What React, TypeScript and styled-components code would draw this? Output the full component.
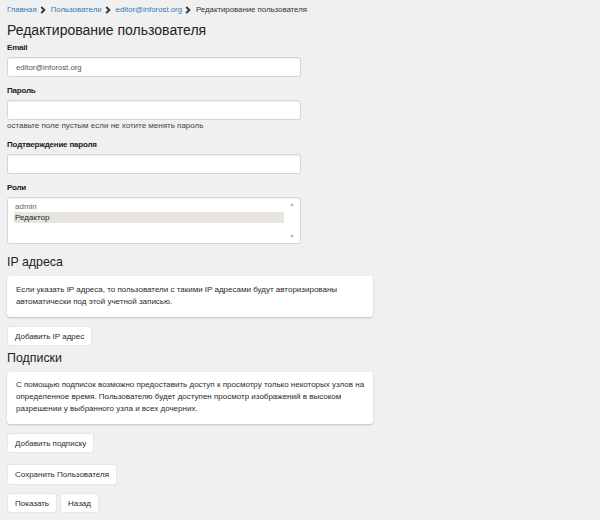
import React from 'react';
import styled, { createGlobalStyle } from 'styled-components';

const Global = createGlobalStyle`
  html, body {
    margin: 0;
    padding: 0;
    background: #f0f0f0;
    font-family: "Liberation Sans", Arial, sans-serif;
    color: #333;
  }
`;

const Page = styled.div`
  padding: 4px 7px 0 7px;
  display: flex;
  flex-direction: column;
  align-items: flex-start;
`;

const Crumbs = styled.nav`
  display: flex;
  align-items: center;
  height: 12px;
  font-size: 7.8px;
  line-height: 12px;
  color: #333;
`;

const Crumb = styled.a`
  color: #337ab7;
  text-decoration: none;
`;

const Sep = styled.span`
  display: inline-flex;
  margin: 0 5px 0 3px;
`;

const Title = styled.h1`
  margin: 3px 0 0 0;
  font-size: 14px;
  line-height: 22px;
  font-weight: 400;
  color: #222;
`;

const Label = styled.label<{ $top: number }>`
  display: block;
  margin-top: ${(p) => p.$top}px;
  font-size: 8px;
  letter-spacing: -0.2px;
  line-height: 12px;
  font-weight: 700;
  color: #222;
`;

const Input = styled.input`
  box-sizing: border-box;
  margin-top: 3px;
  width: 294px;
  height: 20px;
  padding: 0 8px;
  border: 1px solid #d4d4d4;
  border-radius: 3px;
  background: #fff;
  box-shadow: inset 0 1px 1px rgba(0, 0, 0, 0.05);
  font-family: inherit;
  font-size: 7.7px;
  color: #555;
  outline: none;
`;

const Help = styled.div`
  font-size: 8px;
  line-height: 12px;
  color: #444;
`;

const ListBox = styled.div`
  box-sizing: border-box;
  margin-top: 3px;
  width: 294px;
  height: 47px;
  display: flex;
  border: 1px solid #d4d4d4;
  border-radius: 3px;
  background: #fff;
  box-shadow: inset 0 1px 1px rgba(0, 0, 0, 0.05);
`;

const Options = styled.div`
  flex: 1;
  padding: 3px 0 0 6px;
`;

const Option = styled.div<{ $selected?: boolean }>`
  height: 11px;
  line-height: 11px;
  padding-left: 1px;
  font-size: 8px;
  color: ${(p) => (p.$selected ? '#222' : '#666')};
  background: ${(p) => (p.$selected ? '#e8e5e1' : 'transparent')};
`;

const Scroll = styled.div`
  width: 16px;
  display: flex;
  flex-direction: column;
  justify-content: space-between;
  align-items: center;
  padding: 4px 0;
  color: #aaa;
  font-size: 5px;
  line-height: 5px;
`;

const Heading = styled.h2<{ $top: number }>`
  margin: ${(p) => p.$top}px 0 0 0;
  font-size: 12.4px;
  line-height: 18px;
  font-weight: 400;
  color: #222;
`;

const Card = styled.div<{ $pad: number }>`
  box-sizing: border-box;
  margin-top: 5px;
  width: 366px;
  padding: ${(p) => p.$pad}px 4px 9px 9px;
  background: #fff;
  border-radius: 3px;
  box-shadow: 0 1px 2px rgba(0, 0, 0, 0.2);
  font-size: 8px;
  line-height: 12px;
  color: #2a2a2a;
`;

const Button = styled.button<{ $top: number; $h?: number }>`
  margin-top: ${(p) => p.$top}px;
  height: ${(p) => p.$h ?? 20}px;
  padding: 0 7px;
  border: 1px solid #e6e6e6;
  border-radius: 3px;
  background: #fff;
  font-family: inherit;
  font-size: 8px;
  color: #2a2a2a;
  cursor: pointer;
`;

const Row = styled.div`
  display: flex;
  gap: 3px;
`;

const Chevron = () => (
  <svg width="6" height="8" viewBox="0 0 6 8">
    <path d="M1.2 1 L4.4 4 L1.2 7" fill="none" stroke="#333" strokeWidth="1.8" />
  </svg>
);

export default function App() {
  return (
    <Page>
      <Global />
      <Crumbs>
        <Crumb href="#">Главная</Crumb>
        <Sep><Chevron /></Sep>
        <Crumb href="#">Пользователи</Crumb>
        <Sep><Chevron /></Sep>
        <Crumb href="#">editor@inforost.org</Crumb>
        <Sep><Chevron /></Sep>
        <span>Редактирование пользователя</span>
      </Crumbs>
      <Title>Редактирование пользователя</Title>

      <Label $top={1}>Email</Label>
      <Input defaultValue="editor@inforost.org" />

      <Label $top={8}>Пароль</Label>
      <Input type="password" />
      <Help>оставьте поле пустым если не хотите менять пароль</Help>

      <Label $top={7}>Подтверждение пароля</Label>
      <Input type="password" />

      <Label $top={8}>Роли</Label>
      <ListBox>
        <Options>
          <Option>admin</Option>
          <Option $selected>Редактор</Option>
        </Options>
        <Scroll>
          <span>▲</span>
          <span>▼</span>
        </Scroll>
      </ListBox>

      <Heading $top={9}>IP адреса</Heading>
      <Card $pad={8}>
        Если указать IP адреса, то пользователи с такими IP адресами будут авторизированы автоматически под этой учетной записью.
      </Card>
      <Button $top={9}>Добавить IP адрес</Button>

      <Heading $top={3}>Подписки</Heading>
      <Card $pad={7}>
        С помощью подписок возможно предоставить доступ к просмотру только некоторых узлов на определенное время. Пользователю будет доступен просмотр изображений в высоком разрешении у выбранного узла и всех дочерних.
      </Card>
      <Button $top={9}>Добавить подписку</Button>

      <Button $top={11} $h={21}>Сохранить Пользователя</Button>
      <Row>
        <Button $top={8}>Показать</Button>
        <Button $top={8}>Назад</Button>
      </Row>
    </Page>
  );
}
